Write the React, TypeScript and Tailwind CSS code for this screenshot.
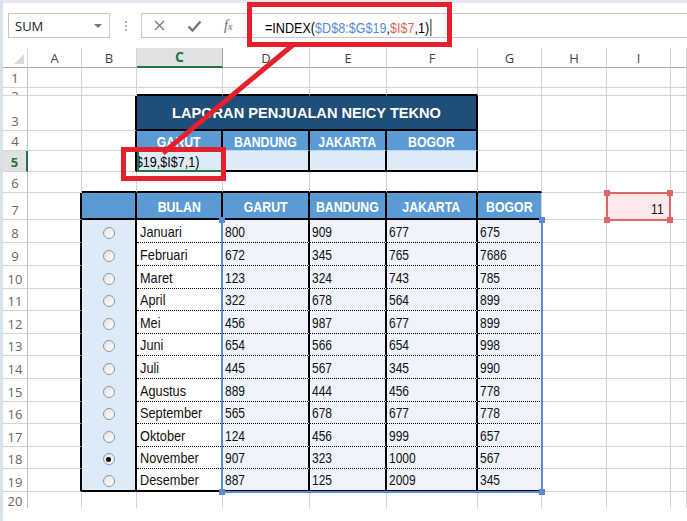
import type { ReactNode } from 'react';

const ARIAL = "font-['Liberation_Sans',Arial,sans-serif]";
const UI = "font-['Open_Sans','Liberation_Sans',sans-serif]";

const COL_W = ['w-[25px]', 'w-[54px]', 'w-[55px]', 'w-[86px]', 'w-[87px]', 'w-[77px]', 'w-[91px]', 'w-[64px]', 'w-[65px]', 'w-[64px]', 'w-[16px]'];
const LETTERS = ['', 'A', 'B', 'C', 'D', 'E', 'F', 'G', 'H', 'I', ''];
// index 0 = column header row, then sheet rows 1..20
const ROW_H = ['h-[20px]', 'h-[20px]', 'h-[8px]', 'h-[35px]', 'h-[20px]', 'h-[21px]', 'h-[21px]', 'h-[27px]', 'h-[23px]', 'h-[23px]', 'h-[23px]', 'h-[22px]', 'h-[23px]', 'h-[22px]', 'h-[23px]', 'h-[23px]', 'h-[22px]', 'h-[23px]', 'h-[22px]', 'h-[23px]', 'h-[16px]'];

const HEAD4 = ['GARUT', 'BANDUNG', 'JAKARTA', 'BOGOR'];
const HEAD7 = ['', 'BULAN', 'GARUT', 'BANDUNG', 'JAKARTA', 'BOGOR'];
const MONTHS = ['Januari', 'Februari', 'Maret', 'April', 'Mei', 'Juni', 'Juli', 'Agustus', 'September', 'Oktober', 'November', 'Desember'];
const SALES = [
    [800, 909, 677, 675],
    [672, 345, 765, 7686],
    [123, 324, 743, 785],
    [322, 678, 564, 899],
    [456, 987, 677, 899],
    [654, 566, 654, 998],
    [445, 567, 345, 990],
    [889, 444, 456, 778],
    [565, 678, 677, 778],
    [124, 456, 999, 657],
    [907, 323, 1000, 567],
    [887, 125, 2009, 345],
];

// the sheet uses a narrow face, squeeze Arial to match
function Head({ children }: { children: ReactNode }) {
    return <span className="inline-block whitespace-nowrap scale-x-[0.82]">{children}</span>;
}

function Radio({ on }: { on?: boolean }) {
    return (
        <span className="w-[12px] h-[12px] rounded-full border border-[#959595] bg-gradient-to-br from-[#e2e2e2] to-white flex items-center justify-center">
            {on && <span className="w-[5px] h-[5px] rounded-full bg-black" />}
        </span>
    );
}

function cellFor(r: number, c: number): { cls: string; body?: ReactNode } {
    // column headers
    if (r === 0) {
        if (c === 0) {
            return {
                cls: 'border-r border-r-[#d4d4d4] border-b border-b-[#ababab] items-end justify-end p-[3px]',
                body: <span className="w-0 h-0 border-l-[10px] border-l-transparent border-b-[10px] border-b-[#d9d9d9]" />,
            };
        }
        if (c === 3) {
            return { cls: 'bg-[#e1e1e1] border-r border-r-[#ababab] border-b-2 border-b-[#217346] items-center justify-center text-[#217346] font-bold text-[14px] leading-[16px]', body: 'C' };
        }
        return { cls: 'border-r border-r-[#d4d4d4] border-b border-b-[#ababab] items-center justify-center text-[#444] text-[13px] leading-[16px]', body: LETTERS[c] };
    }

    // row headers
    if (c === 0) {
        if (r === 5) return { cls: 'bg-[#e1e1e1] border-b border-b-[#d4d4d4] border-r-2 border-r-[#217346] items-end justify-center pb-[1px] text-[#217346] font-bold text-[13px] leading-[16px]', body: r };
        if (r === 2) return { cls: 'border-b border-b-[#d4d4d4] border-r border-r-[#c0c0c0] items-start justify-center text-[#666] text-[13px] leading-[16px]', body: r };
        if (r === 20) return { cls: 'border-r border-r-[#c0c0c0] items-start justify-center pt-[1px] text-[#666] text-[13px] leading-[16px]', body: r };
        return { cls: 'border-b border-b-[#d4d4d4] border-r border-r-[#c0c0c0] items-end justify-center pb-[1px] text-[#666] text-[13px] leading-[16px]', body: r };
    }

    // report title table C3:F5
    if (r === 2 && c >= 3 && c <= 6) return { cls: 'border-r border-r-[#d4d4d4] border-b-2 border-b-black' };
    if (r >= 3 && r <= 5 && c === 2) return { cls: 'border-b border-b-[#d4d4d4] border-r-2 border-r-black' };
    if (r === 3 && c === 3) {
        return {
            cls: `bg-[#1f4e78] border-r-2 border-r-black border-b-2 border-b-black items-center justify-center text-white font-bold text-[14.6px] leading-[18px] ${ARIAL}`,
            body: 'LAPORAN PENJUALAN NEICY TEKNO',
        };
    }
    if (r === 4 && c >= 3 && c <= 6) {
        return { cls: `bg-[#5b9bd5] border-r-2 border-r-black border-b border-b-[#bdd7ee] items-center justify-center pt-[1px] text-white font-bold text-[15px] leading-[17px] ${ARIAL}`, body: <Head>{HEAD4[c - 3]}</Head> };
    }
    if (r === 5 && c === 3) {
        return {
            cls: `bg-[#ddebf7] border-l-2 border-l-[#217346] border-b-2 border-b-[#217346] border-r-2 border-r-black items-end justify-end pr-[21px] text-[15px] leading-[16px] ${ARIAL}`,
            body: <span className="inline-block whitespace-nowrap scale-x-[0.84] origin-right">=INDEX($D$8:$G$19,$I$7,1)</span>,
        };
    }
    if (r === 5 && c >= 4 && c <= 6) return { cls: 'bg-[#ddebf7] border-r-2 border-r-black border-b-2 border-b-black' };

    // sales table B7:G19
    if (r === 6 && c >= 2 && c <= 7) return { cls: 'border-r border-r-[#d4d4d4] border-b-2 border-b-black' };
    if (r >= 7 && r <= 19 && c === 1) return { cls: 'border-b border-b-[#d4d4d4] border-r-2 border-r-black' };
    if (r === 7 && c >= 2 && c <= 7) {
        const right = c === 7 ? 'border-r border-r-[#d4d4d4]' : 'border-r-2 border-r-black';
        return { cls: `bg-[#5b9bd5] ${right} border-b-2 border-b-black items-center justify-center pt-[2px] text-white font-bold text-[15px] leading-[17px] ${ARIAL}`, body: <Head>{HEAD7[c - 2]}</Head> };
    }
    if (r >= 8 && r <= 19 && c >= 2 && c <= 7) {
        const i = r - 8;
        const last = r === 19;
        const bottom = last ? 'border-b-2 border-b-black' : 'border-b border-b-black [border-bottom-style:dotted]';
        if (c === 2) {
            return { cls: `bg-[#ddebf7] border-r-2 border-r-black ${last ? 'border-b-2 border-b-black' : ''} items-center justify-center pt-[2px]`, body: <Radio on={i === 10} /> };
        }
        if (c === 3) {
            return {
                cls: `bg-white border-r-2 border-r-black ${bottom} items-end pl-[3px] pb-[2px] text-[15px] leading-[16px] text-[#111] ${ARIAL}`,
                body: <span className="inline-block whitespace-nowrap scale-x-[0.85] origin-left">{MONTHS[i]}</span>,
            };
        }
        const right = c === 7 ? '' : 'border-r-2 border-r-black';
        return {
            cls: `bg-[#eef3fc] ${right} ${bottom} items-end pl-[2px] pb-[2px] text-[15px] leading-[16px] text-[#111] ${ARIAL}`,
            body: <span className="inline-block whitespace-nowrap scale-x-[0.8] origin-left">{SALES[i][c - 4]}</span>,
        };
    }

    // I7 lookup cell
    if (r === 7 && c === 9) {
        return {
            cls: `bg-[#fde9e9] border-r border-b border-[#d4d4d4] items-end justify-end pr-[6px] pb-[2px] text-[15px] leading-[16px] text-[#111] ${ARIAL}`,
            body: <span className="inline-block scale-x-[0.8] origin-right">11</span>,
        };
    }

    if (r === 20) return { cls: 'border-r border-r-[#d4d4d4]' };
    return { cls: 'border-r border-b border-[#d4d4d4]' };
}

function SheetRow({ r }: { r: number }) {
    const cells: ReactNode[] = [];
    for (let c = 0; c <= 10; c++) {
        // C3:F3 is merged
        if (r === 3 && c >= 4 && c <= 6) continue;
        const { cls, body } = cellFor(r, c);
        const w = r === 3 && c === 3 ? 'w-[341px]' : COL_W[c];
        cells.push(
            <div key={c} className={`${w} shrink-0 flex overflow-hidden ${cls}`}>
                {body}
            </div>
        );
    }
    return <div className={`flex ${ROW_H[r]} ${UI}`}>{cells}</div>;
}

function FormulaBar() {
    return (
        <div className="h-[45px] flex items-start pt-[10px] bg-white">
            {/* Name box */}
            <div className={`ml-[5px] w-[102px] h-[25px] border border-[#c6c6c6] flex items-center justify-between pl-[6px] pr-[7px] text-[13px] leading-[16px] text-[#222] ${UI}`}>
                <span>SUM</span>
                <span className="w-0 h-0 border-l-[4px] border-r-[4px] border-t-[4px] border-l-transparent border-r-transparent border-t-[#777]" />
            </div>

            <div className="w-[31px] h-[25px] flex flex-col items-center justify-center gap-[2px]">
                <span className="w-[2px] h-[2px] bg-[#b5b5b5]" />
                <span className="w-[2px] h-[2px] bg-[#b5b5b5]" />
                <span className="w-[2px] h-[2px] bg-[#b5b5b5]" />
            </div>

            {/* Cancel / enter / insert function */}
            <div className="w-[107px] h-[25px] border border-[#c6c6c6] flex items-center">
                <svg className="ml-[12px]" width="11" height="11" viewBox="0 0 11 11">
                    <path d="M1 1 L10 10 M10 1 L1 10" stroke="#7a7a7a" strokeWidth="1.4" />
                </svg>
                <svg className="ml-[22px]" width="15" height="12" viewBox="0 0 15 12">
                    <path d="M1.5 6.5 L5.5 10.5 L13.5 1.5" stroke="#777" strokeWidth="2.4" fill="none" />
                </svg>
                <span className="ml-[22px] text-[#666] italic font-['Liberation_Serif',serif] text-[14px] leading-none">
                    f<span className="text-[10px]">x</span>
                </span>
            </div>

            {/* Formula input */}
            <div className="flex-1 h-[25px] border-y border-[#c6c6c6] flex items-center pl-[17px] pt-[4px] overflow-hidden">
                <span className={`inline-flex items-center whitespace-nowrap scale-x-[0.84] origin-left text-[15px] leading-[18px] text-black ${ARIAL}`}>
                    <span>=INDEX(</span>
                    <span className="text-[#5b8bd6]">$D$8:$G$19</span>
                    <span>,</span>
                    <span className="text-[#e06666]">$I$7</span>
                    <span>,1)</span>
                    <span className="w-px h-[17px] bg-black ml-[1px]" />
                </span>
            </div>
        </div>
    );
}

export default function App() {
    const rows = Array.from({ length: 21 }, (_, i) => i);
    return (
        <div className="w-[687px] h-[521px] overflow-hidden relative bg-white flex">
            <div className="w-[3px] shrink-0 bg-[#d8e0eb]" />
            <div className="flex-1 flex flex-col">
                <div className="h-[3px] bg-[#e4e8ed]" />
                <FormulaBar />

                <div className="relative">
                    {rows.map((r) => (
                        <SheetRow key={r} r={r} />
                    ))}

                    {/* range reference $D$8:$G$19 */}
                    <div className="absolute left-[218px] top-[172px] w-[322px] h-[273px] border-l-2 border-r-2 border-b-2 border-[#5b8bd6] pointer-events-none" />
                    <span className="absolute left-[216px] top-[169px] w-[6px] h-[6px] bg-[#5b8bd6]" />
                    <span className="absolute left-[536px] top-[169px] w-[6px] h-[6px] bg-[#5b8bd6]" />
                    <span className="absolute left-[536px] top-[441px] w-[6px] h-[6px] bg-[#5b8bd6]" />
                    <span className="absolute left-[216px] top-[441px] w-[6px] h-[6px] bg-[#5b8bd6]" />

                    {/* range reference $I$7 */}
                    <div className="absolute left-[603px] top-[144px] w-[65px] h-[29px] border-2 border-[#e06666] pointer-events-none" />
                    <span className="absolute left-[601px] top-[142px] w-[6px] h-[6px] bg-[#e06666]" />
                    <span className="absolute left-[664px] top-[142px] w-[6px] h-[6px] bg-[#e06666]" />
                    <span className="absolute left-[601px] top-[169px] w-[6px] h-[6px] bg-[#e06666]" />
                    <span className="absolute left-[664px] top-[169px] w-[6px] h-[6px] bg-[#e06666]" />
                </div>
            </div>

            {/* red annotation */}
            <svg className="absolute inset-0 pointer-events-none" width="687" height="521">
                <rect x="249.5" y="4.5" width="200" height="40" fill="none" stroke="#e3202b" strokeWidth="5" />
                <rect x="123.5" y="149.5" width="100" height="29" fill="none" stroke="#e3202b" strokeWidth="5" />
                <line x1="294" y1="44" x2="163" y2="153" stroke="#e3202b" strokeWidth="5" />
            </svg>
        </div>
    );
}
